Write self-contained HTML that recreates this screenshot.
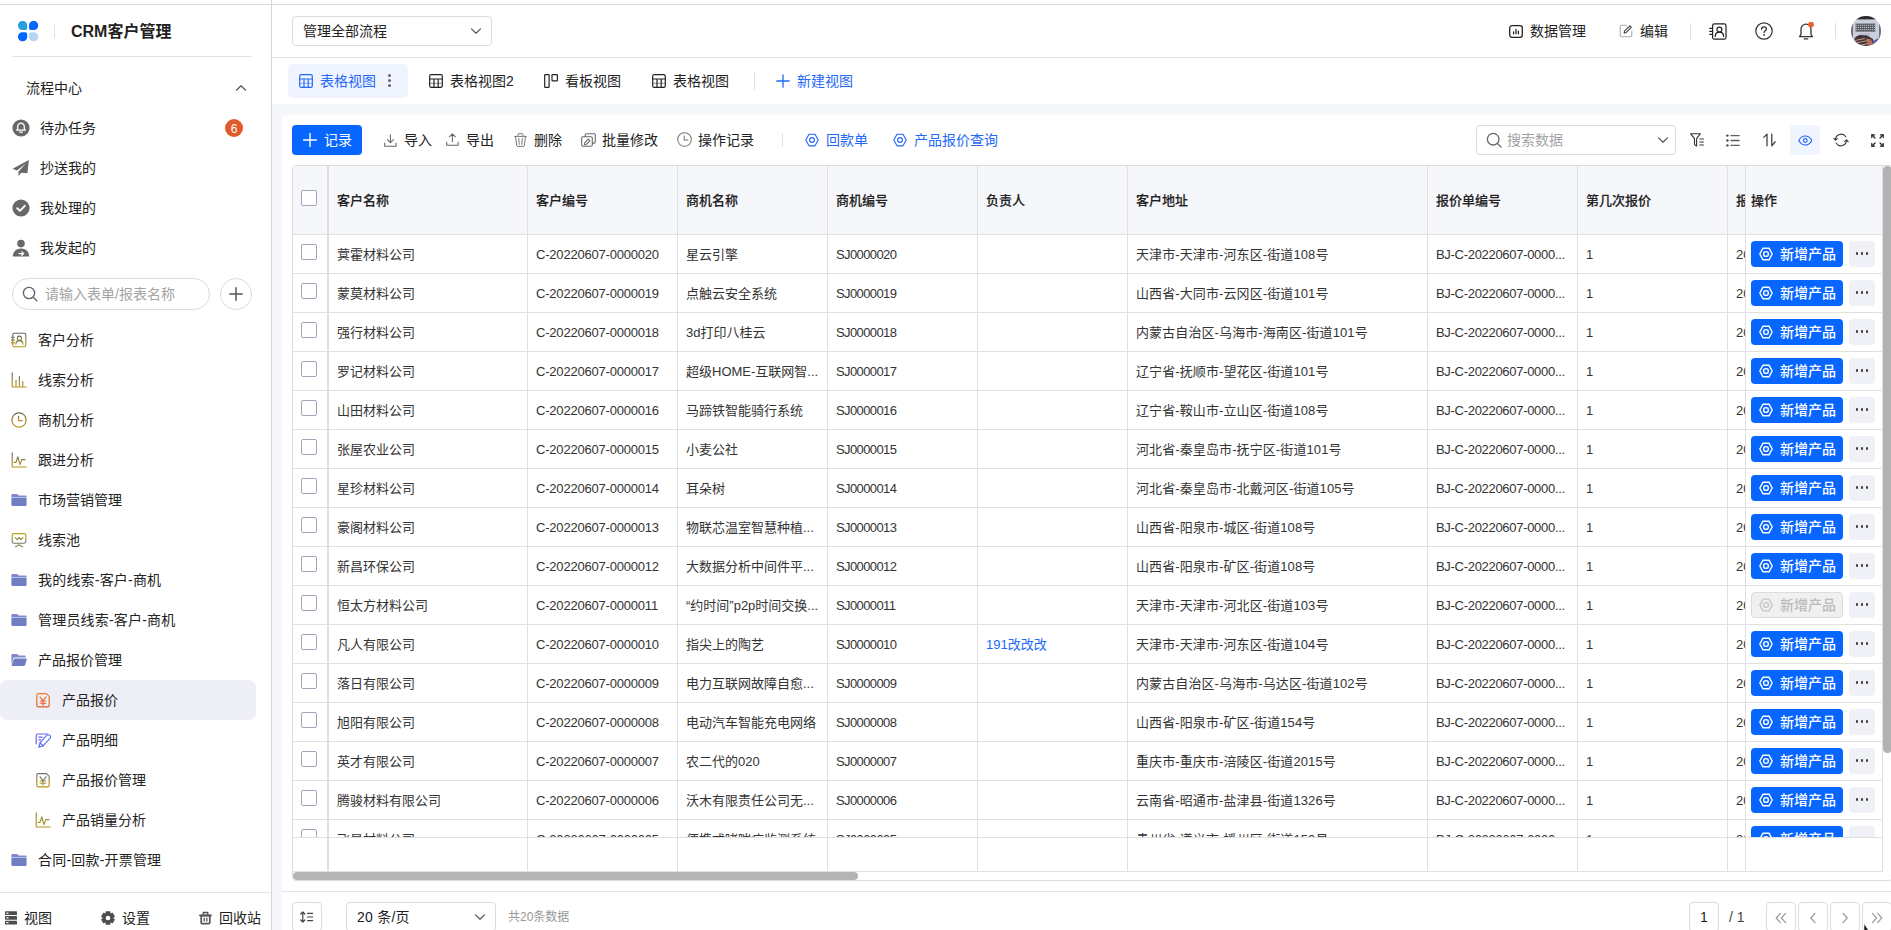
<!DOCTYPE html>
<html lang="zh-CN">
<head>
<meta charset="utf-8">
<title>CRM客户管理</title>
<style>
*{box-sizing:border-box;margin:0;padding:0}
html,body{width:1891px;height:930px;overflow:hidden;background:#fff}
body{position:relative;font-family:"Liberation Sans","Noto Sans CJK SC",sans-serif;font-size:14px;color:#222;line-height:20px}
.abs{position:absolute;white-space:nowrap}
.topline{position:absolute;left:0;top:4px;width:1891px;height:1px;background:#dcdcdc}
.side{position:absolute;left:0;top:0;width:272px;height:930px;border-right:1px solid #d6d6d6;background:transparent}
.title{font-size:16px;font-weight:bold;line-height:24px;color:#1f1f1f}
.t14{font-size:14px;line-height:20px;color:#222}
.t13{font-size:13px;line-height:20px;color:#333}
.ph{color:#a4a4a4}
.badge{width:18px;height:18px;border-radius:9px;background:#e05a2a;color:#fff;font-size:12px;line-height:18px;text-align:center;padding-top:1px}
.pill{border:1px solid #dcdcdc;border-radius:16px;background:#fff}
.main{position:absolute;left:272px;top:5px;width:1619px;height:925px;background:#f5f7fb;overflow:hidden}
.topbar{position:absolute;left:0;top:0;width:1619px;height:53px;background:#fff;border-bottom:1px solid #e2e2e2}
.tabs{position:absolute;left:0;top:53px;width:1619px;height:46px;background:#fff}
.card{position:absolute;left:10px;top:110px;width:1620px;height:830px;background:#fff;border-radius:6px 0 0 0}
.box{border:1px solid #dcdcdc;border-radius:4px;background:#fff}
.blue{color:#2468f8}
.btn{background:#0766ff;color:#fff;border-radius:4px}
.tbl{position:absolute;left:292px;top:165px;width:1601px;height:716px;border:1px solid #dcdcdc;border-radius:4px;overflow:hidden;background:#fff}
.th{position:absolute;top:0;height:69px;background:#f6f7fb;border-bottom:1px solid #e0e0e0}
.thc{position:absolute;font-size:13px;font-weight:500;-webkit-text-stroke:0.15px #222;line-height:20px;color:#222;white-space:nowrap}
.vl{position:absolute;top:0;width:1px;background:#e0e0e0}
.hl{position:absolute;left:0;height:1px;background:#e0e0e0}
.cb{position:absolute;width:16px;height:16px;border:1px solid #a3a4b8;border-radius:2px;background:#fff}
.c{position:absolute;font-size:13px;line-height:20px;color:#333;white-space:nowrap}
.ls1{letter-spacing:-0.2px}
.ls2{letter-spacing:-0.6px}
.ls3{letter-spacing:0.1px}
.ls4{letter-spacing:-0.3px}
.c.blue{color:#2468f8}
.op{position:absolute;left:1458px;width:92px;height:26px;border-radius:4px;background:#0766ff;color:#fff}
.op.dis{background:#f0f0f0;border:1px solid #dcdcdc;color:#bbb}
.op.dis span{left:28px;top:2px}
.op.dis svg{left:7px;top:5px}
.op span{position:absolute;left:29px;top:3px;font-size:14px;line-height:20px;font-weight:500}
.op svg{position:absolute;left:8px;top:6px}
.more{position:absolute;left:1556px;width:26px;height:26px;border-radius:4px;background:#eff1f7}
.more i{position:absolute;top:11.300px;width:2.700px;height:2.700px;border-radius:50%;background:#3a3a3a}

</style>
</head>
<body>
<div class="topline"></div>
<div class="side">
<div class="abs" style="left:18px;top:21px"><svg width="21" height="21" viewBox="0 0 21 21" style="display:block;"><path transform="translate(-0.3,-0.3)" d="M4.6 0.3h0.6a4.3 4.3 0 0 1 4.3 4.3v2.6a2 2 0 0 1-2 2H4.6a4.3 4.3 0 0 1-4.3-4.3v-0.3a4.3 4.3 0 0 1 4.3-4.3z" fill="#28a0dc"/><path transform="translate(0.5,-0.3)" d="M15.4 0.3h-0.6a4.3 4.3 0 0 0-4.3 4.3v2.6a2 2 0 0 0 2 2h2.9a4.3 4.3 0 0 0 4.3-4.3v-0.3a4.3 4.3 0 0 0-4.3-4.3z" fill="#0566ff"/><path transform="translate(-0.3,0.5)" d="M4.6 19.7h0.6a4.3 4.3 0 0 0 4.3-4.3v-2.6a2 2 0 0 0-2-2H4.6a4.3 4.3 0 0 0-4.3 4.3v0.3a4.3 4.3 0 0 0 4.3 4.3z" fill="#0566ff"/><path transform="translate(0.5,0.5)" d="M15.4 19.7h-0.6a4.3 4.3 0 0 1-4.3-4.3v-2.6a2 2 0 0 1 2-2h2.9a4.3 4.3 0 0 1 4.3 4.3v0.3a4.3 4.3 0 0 1-4.3 4.3z" fill="#b5d6f3"/></svg></div>
<div class="abs" style="left:54px;top:24px;width:1px;height:14px;background:#e2e2e2"></div>
<div class="abs title" style="left:71px;top:20px">CRM客户管理</div>
<div class="abs" style="left:12px;top:56px;width:240px;height:1px;background:#e3e3e3"></div>
<div class="abs t14" style="left:26px;top:78px">流程中心</div>
<div class="abs" style="left:235px;top:83px"><svg width="12" height="10" viewBox="0 0 12 10" style="display:block;"><g fill="none" stroke="#555" stroke-width="1.2" stroke-linecap="round" stroke-linejoin="round" ><path d="M1.400 7.200 6 2.800l4.600 4.400"/></g></svg></div>
<div class="abs" style="left:12px;top:119px"><svg width="18" height="18" viewBox="0 0 18 18" style="display:block;"><circle cx="9" cy="9" r="8.6" fill="#686868"/><path d="M9 4.2a3.3 3.3 0 0 0-3.3 3.3v2.4l-1 1.3h8.6l-1-1.3V7.5A3.3 3.3 0 0 0 9 4.2z" fill="none" stroke="#fff" stroke-width="1.3" stroke-linejoin="round"/><path d="M7.6 13.1h2.8" stroke="#fff" stroke-width="1.3" stroke-linecap="round"/></svg></div><div class="abs t14" style="left:40px;top:118px">待办任务</div>
<div class="abs" style="left:12px;top:159px"><svg width="18" height="18" viewBox="0 0 18 18" style="display:block;"><path d="M16.9 0.900 0.600 9.700 4.900 11.600 13.600 4.800 6.500 12.400V16.900L9.200 13.700 15.400 14.300z" fill="#686868"/></svg></div><div class="abs t14" style="left:40px;top:158px">抄送我的</div>
<div class="abs" style="left:12px;top:199px"><svg width="18" height="18" viewBox="0 0 18 18" style="display:block;"><circle cx="9" cy="9" r="8.6" fill="#686868"/><path d="M5.2 9.2l2.7 2.6 4.9-5" fill="none" stroke="#fff" stroke-width="1.9" stroke-linecap="round" stroke-linejoin="round"/></svg></div><div class="abs t14" style="left:40px;top:198px">我处理的</div>
<div class="abs" style="left:12px;top:239px"><svg width="18" height="18" viewBox="0 0 18 18" style="display:block;"><circle cx="9" cy="4.6" r="3.8" fill="#686868"/><path d="M0.8 17.6c0-4.6 3.4-8 8.2-8s8.2 3.4 8.2 8z" fill="#686868"/><path d="M7 14.6h4.6m-1.8-1.7 1.9 1.7-1.9 1.7" fill="none" stroke="#fff" stroke-width="1.2" stroke-linecap="round" stroke-linejoin="round"/></svg></div><div class="abs t14" style="left:40px;top:238px">我发起的</div>
<div class="abs badge" style="left:225px;top:119px">6</div>
<div class="abs pill" style="left:12px;top:278px;width:198px;height:32px"></div>
<div class="abs" style="left:22px;top:286px"><svg width="16" height="16" viewBox="0 0 16 16" style="display:block;"><g fill="none" stroke="#666" stroke-width="1.4" stroke-linecap="round" stroke-linejoin="round" ><circle cx="7" cy="7" r="5.600"/><path d="M11.200 11.200l3.600 3.600"/></g></svg></div>
<div class="abs t14 ph" style="left:45px;top:284px">请输入表单/报表名称</div>
<div class="abs pill" style="left:220px;top:278px;width:32px;height:32px"></div>
<div class="abs" style="left:229px;top:287px"><svg width="14" height="14" viewBox="0 0 14 14" style="display:block;"><g fill="none" stroke="#555" stroke-width="1.5" stroke-linecap="round" stroke-linejoin="round" ><path d="M7 0.800v12.400M0.800 7h12.400"/></g></svg></div>
<div class="abs" style="left:0;top:680px;width:256px;height:40px;background:#eeeff6;border-radius:7px"></div>
<div class="abs" style="left:11px;top:332px"><svg width="16" height="16" viewBox="0 0 16 16" style="display:block;"><defs><linearGradient id="g1" x1="0" y1="0" x2="0" y2="1"><stop offset="0" stop-color="#5d6b5a"/><stop offset="1" stop-color="#b8961a"/></linearGradient></defs><g fill="none" stroke="url(#g1)" stroke-width="1.1" stroke-linecap="round" stroke-linejoin="round"><rect x="1.8" y="1.2" width="13" height="13.6" rx="1.6"/><circle cx="8.4" cy="6.2" r="2.1"/><path d="M4.9 12.2c0-2.200 1.400-3.600 3.500-3.600s3.500 1.400 3.500 3.600"/><path d="M0.500 5.300h2.800M0.500 8.100h2.800M0.500 10.900h2.800"/></g></svg></div><div class="abs t14" style="left:38px;top:330px">客户分析</div>
<div class="abs" style="left:11px;top:372px"><svg width="16" height="16" viewBox="0 0 16 16" style="display:block;"><defs><linearGradient id="g2" x1="0" y1="0" x2="0" y2="1"><stop offset="0" stop-color="#5d6b5a"/><stop offset="1" stop-color="#b8961a"/></linearGradient></defs><g fill="none" stroke="url(#g2)" stroke-width="1.1" stroke-linecap="round" stroke-linejoin="round"><path d="M1.2 0.8v14.2h14"/><path d="M5 14.6V8.2M8.4 14.6V4.6M11.8 14.6V9.6"/></g></svg></div><div class="abs t14" style="left:38px;top:370px">线索分析</div>
<div class="abs" style="left:11px;top:412px"><svg width="16" height="16" viewBox="0 0 16 16" style="display:block;"><defs><linearGradient id="g3" x1="0" y1="0" x2="0" y2="1"><stop offset="0" stop-color="#6a6a4a"/><stop offset="1" stop-color="#c0900f"/></linearGradient></defs><g fill="none" stroke="url(#g3)" stroke-width="1.1" stroke-linecap="round" stroke-linejoin="round"><circle cx="8" cy="8" r="7.1"/><path d="M7.6 4.2v4.4h3.6"/></g></svg></div><div class="abs t14" style="left:38px;top:410px">商机分析</div>
<div class="abs" style="left:11px;top:452px"><svg width="16" height="16" viewBox="0 0 16 16" style="display:block;"><defs><linearGradient id="g4" x1="0" y1="0" x2="0" y2="1"><stop offset="0" stop-color="#5d6b5a"/><stop offset="1" stop-color="#b8961a"/></linearGradient></defs><g fill="none" stroke="url(#g4)" stroke-width="1.1" stroke-linecap="round" stroke-linejoin="round"><path d="M1.2 0.8v14.2h14"/><path d="M3.200 10.400h1.800l1.800-5.600 2.200 7.800 1.800-5h3.200"/></g></svg></div><div class="abs t14" style="left:38px;top:450px">跟进分析</div>
<div class="abs" style="left:11px;top:492px"><svg width="16" height="16" viewBox="0 0 16 16" style="display:block;"><path d="M0.4 3.2c0-.7.5-1.2 1.2-1.2h4.2c.4 0 .8.2 1 .5l.7 1h7c.7 0 1.1.5 1.1 1.1V5H0.4z" fill="#7f8bcb"/><path d="M0.4 5.6h15.2v7.2c0 .7-.5 1.2-1.2 1.2H1.6c-.7 0-1.2-.5-1.2-1.2z" fill="#707dc2"/></svg></div><div class="abs t14" style="left:38px;top:490px">市场营销管理</div>
<div class="abs" style="left:11px;top:532px"><svg width="16" height="16" viewBox="0 0 16 16" style="display:block;"><defs><linearGradient id="g5" x1="0" y1="0" x2="0" y2="1"><stop offset="0" stop-color="#b8a21a"/><stop offset="1" stop-color="#707a70"/></linearGradient></defs><g fill="none" stroke="url(#g5)" stroke-width="1.1" stroke-linecap="round" stroke-linejoin="round"><rect x="1.2" y="1.6" width="13.6" height="9.6" rx="1.6"/><path d="M4 5.4l2.2 2.2 2-2.2 1.8 2.2 2-2.2"/><path d="M8 11.4v1.4M4.6 14.8 8 12.8l3.4 2"/></g></svg></div><div class="abs t14" style="left:38px;top:530px">线索池</div>
<div class="abs" style="left:11px;top:572px"><svg width="16" height="16" viewBox="0 0 16 16" style="display:block;"><path d="M0.4 3.2c0-.7.5-1.2 1.2-1.2h4.2c.4 0 .8.2 1 .5l.7 1h7c.7 0 1.1.5 1.1 1.1V5H0.4z" fill="#7f8bcb"/><path d="M0.4 5.6h15.2v7.2c0 .7-.5 1.2-1.2 1.2H1.6c-.7 0-1.2-.5-1.2-1.2z" fill="#707dc2"/></svg></div><div class="abs t14" style="left:38px;top:570px;letter-spacing:.2px">我的线索-客户-商机</div>
<div class="abs" style="left:11px;top:612px"><svg width="16" height="16" viewBox="0 0 16 16" style="display:block;"><path d="M0.4 3.2c0-.7.5-1.2 1.2-1.2h4.2c.4 0 .8.2 1 .5l.7 1h7c.7 0 1.1.5 1.1 1.1V5H0.4z" fill="#7f8bcb"/><path d="M0.4 5.6h15.2v7.2c0 .7-.5 1.2-1.2 1.2H1.6c-.7 0-1.2-.5-1.2-1.2z" fill="#707dc2"/></svg></div><div class="abs t14" style="left:38px;top:610px;letter-spacing:.2px">管理员线索-客户-商机</div>
<div class="abs" style="left:11px;top:652px"><svg width="16" height="16" viewBox="0 0 16 16" style="display:block;"><path d="M0.4 3.2c0-.7.5-1.2 1.2-1.2h4.2c.4 0 .8.2 1 .5l.7 1h6c.7 0 1.1.5 1.1 1.1v.8H3.6c-.6 0-1.1.4-1.3 1L0.4 12.4z" fill="#7f8bcb"/><path d="M3.9 6.6h11c.6 0 1 .5.8 1.1l-1.6 5.4c-.2.5-.7.9-1.2.9H1.4c-.5 0-.9-.5-.7-1l1.9-5.5c.2-.5.7-.9 1.3-.9z" fill="#707dc2"/></svg></div><div class="abs t14" style="left:38px;top:650px">产品报价管理</div>
<div class="abs" style="left:35px;top:692px"><svg width="16" height="16" viewBox="0 0 16 16" style="display:block;"><defs><linearGradient id="g6" x1="0" y1="0" x2="0" y2="1"><stop offset="0" stop-color="#ee7a2e"/><stop offset="1" stop-color="#de5a2a"/></linearGradient></defs><g fill="none" stroke="url(#g6)" stroke-width="1.15" stroke-linecap="round" stroke-linejoin="round"><path d="M1.800 3.200c0-.9.700-1.600 1.600-1.600h8l2.800 2.800v8.800c0 .9-.700 1.600-1.600 1.600H3.400c-.9 0-1.600-.7-1.600-1.600z"/><path d="M3 2h8.200" stroke-width="1.900"/><path d="M5 4.800 8 8.600l3-3.800M8 8.600v4.600M5.200 9h5.600M5.200 11.200h5.600"/></g></svg></div><div class="abs t14" style="left:62px;top:690px">产品报价</div>
<div class="abs" style="left:35px;top:732px"><svg width="16" height="16" viewBox="0 0 16 16" style="display:block;"><defs><linearGradient id="g8" x1="0" y1="0" x2="1" y2="1"><stop offset="0" stop-color="#7a5cf5"/><stop offset="1" stop-color="#3f7cf5"/></linearGradient></defs><g fill="none" stroke="url(#g8)" stroke-width="1.2" stroke-linecap="round" stroke-linejoin="round"><path d="M12.6 2H2.6C1.8 2 1.2 2.6 1.2 3.4v8.4"/><path d="M3.8 5.2h3.4M3.8 7.8h1.8"/><path d="M11.600 3.400a2.200 2.200 0 0 1 3.200 3.200l-6.800 7.200-4.200 1.400 1.200-4.400z"/><path d="M5.200 11l3 3"/></g></svg></div><div class="abs t14" style="left:62px;top:730px">产品明细</div>
<div class="abs" style="left:35px;top:772px"><svg width="16" height="16" viewBox="0 0 16 16" style="display:block;"><defs><linearGradient id="g7" x1="0" y1="0" x2="0" y2="1"><stop offset="0" stop-color="#6a7468"/><stop offset="1" stop-color="#c09a18"/></linearGradient></defs><g fill="none" stroke="url(#g7)" stroke-width="1.15" stroke-linecap="round" stroke-linejoin="round"><path d="M1.800 3.200c0-.9.700-1.600 1.600-1.600h8l2.800 2.800v8.800c0 .9-.700 1.600-1.600 1.600H3.400c-.9 0-1.600-.7-1.600-1.600z"/><path d="M3 2h8.200" stroke-width="1.900"/><path d="M5 4.800 8 8.600l3-3.800M8 8.600v4.600M5.200 9h5.600M5.200 11.200h5.600"/></g></svg></div><div class="abs t14" style="left:62px;top:770px">产品报价管理</div>
<div class="abs" style="left:35px;top:812px"><svg width="16" height="16" viewBox="0 0 16 16" style="display:block;"><defs><linearGradient id="g9" x1="0" y1="0" x2="0" y2="1"><stop offset="0" stop-color="#8a8a3a"/><stop offset="1" stop-color="#b8961a"/></linearGradient></defs><g fill="none" stroke="url(#g9)" stroke-width="1.1" stroke-linecap="round" stroke-linejoin="round"><path d="M1.2 0.8v14.2h14"/><path d="M3.200 10.400h1.800l1.800-5.600 2.200 7.800 1.800-5h3.200"/></g></svg></div><div class="abs t14" style="left:62px;top:810px">产品销量分析</div>
<div class="abs" style="left:11px;top:852px"><svg width="16" height="16" viewBox="0 0 16 16" style="display:block;"><path d="M0.4 3.2c0-.7.5-1.2 1.2-1.2h4.2c.4 0 .8.2 1 .5l.7 1h7c.7 0 1.1.5 1.1 1.1V5H0.4z" fill="#7f8bcb"/><path d="M0.4 5.6h15.2v7.2c0 .7-.5 1.2-1.2 1.2H1.6c-.7 0-1.2-.5-1.2-1.2z" fill="#707dc2"/></svg></div><div class="abs t14" style="left:38px;top:850px;letter-spacing:.2px">合同-回款-开票管理</div>
<div class="abs" style="left:0;top:892px;width:271px;height:1px;background:#e3e3e3"></div>
<div class="abs" style="left:5px;top:911px"><svg width="12" height="14" viewBox="0 0 12 14" style="display:block;"><g fill="#4d4d4d"><rect x="0" y="0.300" width="12" height="3.800" rx=".5"/><rect x="0" y="5" width="12" height="3.800" rx=".5"/><rect x="0" y="9.700" width="12" height="3.800" rx=".5"/></g><g fill="#fff"><rect x="1.300" y="1.600" width="2.200" height="1.200"/><rect x="1.300" y="6.300" width="2.200" height="1.200"/><rect x="1.300" y="11" width="2.200" height="1.200"/></g></svg></div><div class="abs t14" style="left:24px;top:908px">视图</div>
<div class="abs" style="left:101px;top:911px"><svg width="14" height="14" viewBox="0 0 14 14" style="display:block;"><path fill="#4d4d4d" stroke="#4d4d4d" stroke-width="1.200" stroke-linejoin="round" d="M5.08 2.71 L5.11 0.89 L8.89 0.89 L8.92 2.71 L9.76 3.19 L11.35 2.30 L13.24 5.58 L11.67 6.51 L11.67 7.49 L13.24 8.42 L11.35 11.70 L9.76 10.81 L8.92 11.29 L8.89 13.11 L5.11 13.11 L5.08 11.29 L4.24 10.81 L2.65 11.70 L0.76 8.42 L2.33 7.49 L2.33 6.51 L0.76 5.58 L2.65 2.30 L4.24 3.19z"/><circle cx="7" cy="7" r="2.300" fill="#fff"/></svg></div><div class="abs t14" style="left:122px;top:908px">设置</div>
<div class="abs" style="left:198.500px;top:911px"><svg width="13" height="14" viewBox="0 0 13 14" style="display:block;"><g fill="none" stroke="#555" stroke-linejoin="round"><path d="M2.200 4.600h8.600v7c0 .6-.4 1-1 1H3.200c-.6 0-1-.4-1-1z" stroke-width="1.700"/><path d="M0.900 4.300h11.200" stroke-width="1.700" stroke-linecap="round"/><path d="M4.300 3.800V1.600h4.400v2.200" stroke-width="1.500"/><path d="M5.200 6.800v3.600M7.800 6.800v3.600" stroke-width="1.300"/></g></svg></div><div class="abs t14" style="left:219px;top:908px">回收站</div>
</div>
<div class="abs" style="left:272px;top:5px;width:1619px;height:52px;background:#fff"></div>
<div class="abs" style="left:272px;top:57px;width:1619px;height:1px;background:#e2e2e2"></div>
<div class="abs" style="left:272px;top:104px;width:1619px;height:826px;background:#f5f7fb"></div>
<div class="abs" style="left:282px;top:115px;width:1620px;height:830px;background:#fff;border-radius:4px 0 0 0"></div>
<div class="abs box" style="left:292px;top:16px;width:200px;height:30px"></div><div class="abs t14" style="left:303px;top:21px">管理全部流程</div><div class="abs" style="left:470px;top:26px"><svg width="12" height="10" viewBox="0 0 12 10" style="display:block;"><g fill="none" stroke="#555" stroke-width="1.2" stroke-linecap="round" stroke-linejoin="round" ><path d="M1.500 2.900 6 7.200l4.500-4.300"/></g></svg></div>
<div class="abs" style="left:1509px;top:25px"><svg width="14" height="13" viewBox="0 0 14 13" style="display:block;"><g fill="none" stroke="#222" stroke-width="1.3" stroke-linecap="round" stroke-linejoin="round" ><rect x="0.700" y="0.700" width="12.600" height="11.600" rx="2.200"/><path d="M4.600 8.800V6.800M7 8.800V4.400M9.400 8.800V6.200"/></g></svg></div><div class="abs t14" style="left:1530px;top:21px">数据管理</div>
<div class="abs" style="left:1619px;top:24px"><svg width="14" height="14" viewBox="0 0 14 14" style="display:block;"><g fill="none" stroke-linecap="round" stroke-linejoin="round"><path d="M7.400 1.200H3c-1 0-1.800.8-1.800 1.800v8c0 1 .8 1.800 1.800 1.800h8c1 0 1.800-.8 1.800-1.800V7" stroke="#aaa" stroke-width="1.100"/><path d="M10.800 1.800l1.500 1.500-5.300 5.300-1.900.4.400-1.900z" stroke="#444" stroke-width="1.100"/></g></svg></div><div class="abs t14" style="left:1640px;top:21px">编辑</div>
<div class="abs" style="left:1690px;top:23px;width:1px;height:16px;background:#e0e0e0"></div>
<div class="abs" style="left:1709px;top:23px"><svg width="18" height="17" viewBox="0 0 18 17" style="display:block;"><g fill="none" stroke="#222" stroke-width="1.2" stroke-linecap="round" stroke-linejoin="round" ><rect x="3.600" y="0.800" width="13.400" height="15.400" rx="1.800"/><circle cx="10.400" cy="6.600" r="2.500"/><path d="M6.200 13.400c0-2.600 1.700-4.200 4.200-4.200s4.200 1.600 4.200 4.200"/><path d="M0.800 5.400h2.600M0.800 8.400h2.600M0.800 11.400h2.600"/></g></svg></div><div class="abs" style="left:1755px;top:22px"><svg width="18" height="18" viewBox="0 0 18 18" style="display:block;"><circle cx="9" cy="9" r="8.200" fill="none" stroke="#333" stroke-width="1.200"/><path d="M6.600 7.200c0-1.400 1-2.400 2.400-2.400s2.400.9 2.400 2.200c0 1.700-2.300 1.800-2.300 3.600" fill="none" stroke="#333" stroke-width="1.300" stroke-linecap="round"/><circle cx="9.100" cy="12.900" r=".9" fill="#333"/></svg></div><div class="abs" style="left:1798px;top:22px"><svg width="18" height="18" viewBox="0 0 18 18" style="display:block;"><path d="M8 2.200a5 5 0 0 0-5 5v5.200L1.600 14.600h12.800L13 12.400V7.200a5 5 0 0 0-5-5z" fill="none" stroke="#333" stroke-width="1.300" stroke-linejoin="round"/><path d="M6.200 16.800h3.600" stroke="#333" stroke-width="1.300" stroke-linecap="round"/><circle cx="13" cy="2.600" r="2.900" fill="#e8622c"/></svg></div><div class="abs" style="left:1835px;top:23px;width:1px;height:16px;background:#e0e0e0"></div><div class="abs" style="left:1851px;top:16px"><svg width="30" height="30" viewBox="0 0 30 30" style="display:block;"><defs><clipPath id="av"><circle cx="15" cy="15" r="15"/></clipPath></defs><g clip-path="url(#av)"><rect width="30" height="30" fill="#c9cfdb"/><rect x="0" y="0" width="30" height="3.400" fill="#2b2b2e"/><rect x="0" y="3.400" width="2" height="20" fill="#6d707a"/><rect x="28" y="3.400" width="2" height="20" fill="#6d707a"/><rect x="4.600" y="7.600" width="19.600" height="8" fill="#55575f"/><g stroke="#d6d9e0" stroke-width=".9"><path d="M5 9.300h19M5 11.500h19M5 13.700h19" stroke-dasharray="1.200 .8"/></g><rect x="9" y="17" width="10" height="4" fill="#b9bfcc"/><path d="M2 30c0-6 2-10 7-11l7 .6 6 3.400 1 7z" fill="#3f3335"/><path d="M4 24.500l10-2M5 27l11-2.200M8 29.500l9-2" stroke="#c79a8c" stroke-width="1.100" fill="none"/><path d="M15 22.500l5 .8 3 6.700h-6z" fill="#b5705f"/><path d="M22 25l8-4v9h-7z" fill="#565fae"/></g></svg></div>
<div class="abs" style="left:288px;top:64px;width:120px;height:34px;background:#eff4fe;border-radius:5px"></div><div class="abs" style="left:299px;top:74px"><svg width="14" height="14" viewBox="0 0 14 14" style="display:block;"><g fill="none" stroke="#2468f8" stroke-width="1.2" stroke-linecap="round" stroke-linejoin="round" ><rect x="0.700" y="0.700" width="12.600" height="12.600" rx="1.600"/><path d="M0.700 5h12.600M5 5v8.300M9.200 5v8.300"/><path d="M0.700 9.400h12.600" opacity=".4"/></g></svg></div><div class="abs t14 blue" style="left:320px;top:71px">表格视图</div><div class="abs" style="left:388px;top:74px;width:3px;height:3px;border-radius:50%;background:#666;box-shadow:0 5px 0 #666,0 10px 0 #666"></div>
<div class="abs" style="left:429px;top:74px"><svg width="14" height="14" viewBox="0 0 14 14" style="display:block;"><g fill="none" stroke="#222" stroke-width="1.2" stroke-linecap="round" stroke-linejoin="round" ><rect x="0.700" y="0.700" width="12.600" height="12.600" rx="1.600"/><path d="M0.700 5h12.600M5 5v8.300M9.200 5v8.300"/><path d="M0.700 9.400h12.600" opacity=".4"/></g></svg></div><div class="abs t14" style="left:450px;top:71px">表格视图2</div><div class="abs" style="left:544px;top:74px"><svg width="15" height="14" viewBox="0 0 15 14" style="display:block;"><g fill="none" stroke="#222" stroke-width="1.2" stroke-linecap="round" stroke-linejoin="round" ><rect x="0.700" y="0.700" width="4.400" height="12.600" rx=".6"/><rect x="8" y="0.700" width="5.400" height="6.200" rx=".6"/></g></svg></div><div class="abs t14" style="left:565px;top:71px">看板视图</div><div class="abs" style="left:652px;top:74px"><svg width="14" height="14" viewBox="0 0 14 14" style="display:block;"><g fill="none" stroke="#222" stroke-width="1.2" stroke-linecap="round" stroke-linejoin="round" ><rect x="0.700" y="0.700" width="12.600" height="12.600" rx="1.600"/><path d="M0.700 5h12.600M5 5v8.300M9.200 5v8.300"/><path d="M0.700 9.400h12.600" opacity=".4"/></g></svg></div><div class="abs t14" style="left:673px;top:71px">表格视图</div><div class="abs" style="left:754px;top:72px;width:1px;height:18px;background:#e0e0e0"></div><div class="abs" style="left:776px;top:74px"><svg width="14" height="14" viewBox="0 0 14 14" style="display:block;"><g fill="none" stroke="#2468f8" stroke-width="1.3" stroke-linecap="round" stroke-linejoin="round" ><path d="M7 0.800v12.400M0.800 7h12.400"/></g></svg></div><div class="abs t14 blue" style="left:797px;top:71px">新建视图</div>
<div class="abs btn" style="left:292px;top:125px;width:70px;height:30px"></div><div class="abs" style="left:303px;top:133px"><svg width="14" height="14" viewBox="0 0 14 14" style="display:block;"><g fill="none" stroke="#fff" stroke-width="1.4" stroke-linecap="round" stroke-linejoin="round" ><path d="M7 0.600v12.800M0.600 7h12.800"/></g></svg></div><div class="abs t14" style="left:324px;top:130px;color:#fff">记录</div>
<div class="abs" style="left:384px;top:134px"><svg width="13" height="13" viewBox="0 0 13 13" style="display:block;"><g fill="none" stroke="#666" stroke-width="1.05" stroke-linecap="round" stroke-linejoin="round" ><path d="M6.400 0.800v7.600M3.400 5.600l3 3 3-3"/><path d="M0.700 8.800v3.400h11.400V8.800" stroke-linejoin="miter" stroke-linecap="butt"/></g></svg></div><div class="abs t14" style="left:404px;top:130px">导入</div>
<div class="abs" style="left:446px;top:133px"><svg width="13" height="13" viewBox="0 0 13 13" style="display:block;"><g fill="none" stroke="#666" stroke-width="1.05" stroke-linecap="round" stroke-linejoin="round" ><path d="M6.400 8.600V0.900M3.400 3.800l3-3 3 3"/><path d="M0.700 8.800v3.400h11.400V8.800" stroke-linejoin="miter" stroke-linecap="butt"/></g></svg></div><div class="abs t14" style="left:466px;top:130px">导出</div>
<div class="abs" style="left:514px;top:133px"><svg width="13" height="14" viewBox="0 0 13 14" style="display:block;"><g fill="none" stroke="#777" stroke-width="1" stroke-linecap="round" stroke-linejoin="round" ><path d="M0.600 3.400h11.800M4 3.200V1.300c0-.3.200-.6.600-.6h3.800c.3 0 .6.200.6.600v1.900"/><path d="M1.500 3.600l1.200 8.800c.1.600.5 1 1.100 1h5.400c.6 0 1-.4 1.100-1l1.200-8.800"/><path d="M4.700 5.400l.5 6M8.300 5.400l-.5 6"/></g></svg></div><div class="abs t14" style="left:534px;top:130px">删除</div>
<div class="abs" style="left:581px;top:133px"><svg width="15" height="14" viewBox="0 0 15 14" style="display:block;"><g fill="none" stroke="#666" stroke-width="1.05" stroke-linecap="round" stroke-linejoin="round" ><path d="M4.200 3.400V1.900c0-.7.500-1.200 1.200-1.200h7.700c.7 0 1.200.5 1.200 1.200v7c0 .7-.5 1.200-1.200 1.200h-1.500"/><rect x="0.700" y="3.700" width="10.600" height="9.600" rx="1.200"/><path d="M7.300 6.100l1.700 1.700-3.700 3.600-2 .4.400-2z"/></g></svg></div><div class="abs t14" style="left:602px;top:130px">批量修改</div>
<div class="abs" style="left:677px;top:132px"><svg width="15" height="15" viewBox="0 0 15 15" style="display:block;"><g fill="none" stroke="#777" stroke-width="1.05" stroke-linecap="round" stroke-linejoin="round" ><circle cx="7.500" cy="7.500" r="6.800"/><path d="M7.200 3.800v4.200h3.600"/></g></svg></div><div class="abs t14" style="left:698px;top:130px">操作记录</div>
<div class="abs" style="left:782px;top:133px;width:1px;height:14px;background:#e0e0e0"></div><div class="abs" style="left:805px;top:133px"><svg width="14" height="14" viewBox="0 0 14 14" style="display:block;"><g fill="none" stroke="#2468f8" stroke-width="1.15" stroke-linecap="round" stroke-linejoin="round" ><path d="M4 1.200h6l3.200 5.800-3.200 5.800H4L0.800 7z"/><circle cx="7" cy="7" r="2.400"/></g></svg></div><div class="abs t14 blue" style="left:826px;top:130px">回款单</div><div class="abs" style="left:893px;top:133px"><svg width="14" height="14" viewBox="0 0 14 14" style="display:block;"><g fill="none" stroke="#2468f8" stroke-width="1.15" stroke-linecap="round" stroke-linejoin="round" ><path d="M4 1.200h6l3.200 5.800-3.200 5.800H4L0.800 7z"/><circle cx="7" cy="7" r="2.400"/></g></svg></div><div class="abs t14 blue" style="left:914px;top:130px">产品报价查询</div>
<div class="abs box" style="left:1476px;top:125px;width:200px;height:30px"></div><div class="abs" style="left:1486px;top:132px"><svg width="16" height="16" viewBox="0 0 16 16" style="display:block;"><g fill="none" stroke="#666" stroke-width="1.3" stroke-linecap="round" stroke-linejoin="round" ><circle cx="7.200" cy="7.200" r="5.800"/><path d="M11.600 11.600l3.400 3.400"/></g></svg></div><div class="abs t14 ph" style="left:1507px;top:130px">搜索数据</div><div class="abs" style="left:1657px;top:135px"><svg width="12" height="10" viewBox="0 0 12 10" style="display:block;"><g fill="none" stroke="#555" stroke-width="1.2" stroke-linecap="round" stroke-linejoin="round" ><path d="M1.500 2.900 6 7.200l4.500-4.300"/></g></svg></div>
<div class="abs" style="left:1790px;top:125px;width:30px;height:30px;background:#eff4fe;border-radius:4px"></div><div class="abs" style="left:1690.0px;top:133.0px"><svg width="14" height="14" viewBox="0 0 14 14" style="display:block;"><g fill="none" stroke="#333" stroke-width="1.1" stroke-linecap="round" stroke-linejoin="round" ><path d="M0.700 0.800h9.600L6.600 5.600v7.400L4.500 11.600V5.600z"/><path d="M9.800 6h3.600M9.800 9h3.600M9.800 12h3.600"/></g></svg></div><div class="abs" style="left:1726.0px;top:133.5px"><svg width="14" height="13" viewBox="0 0 14 13" style="display:block;"><g fill="#4a4a55"><circle cx="1.400" cy="1.600" r="1.200"/><circle cx="1.400" cy="6.500" r="1.200"/><circle cx="1.400" cy="11.400" r="1.200"/></g><g stroke="#5a6257" stroke-width="1.300" stroke-linecap="round"><path d="M5 1.600h8.200M5 6.500h8.200M5 11.400h8.200"/></g></svg></div><div class="abs" style="left:1763.0px;top:133.0px"><svg width="13" height="14" viewBox="0 0 13 14" style="display:block;"><g fill="none" stroke="#333" stroke-width="1.2" stroke-linecap="round" stroke-linejoin="round" ><path d="M0.800 4.400 4 1.200v11.600"/><path d="M12.200 8.600 8.800 12.800V1.200"/></g></svg></div><div class="abs" style="left:1797.7px;top:134.5px"><svg width="14.6" height="11" viewBox="0 0 16 12" style="display:block;"><g fill="none" stroke="#2468f8" stroke-width="1.25" stroke-linecap="round" stroke-linejoin="round" ><path d="M0.800 6C2.600 2.800 5 1.100 8 1.100S13.400 2.800 15.200 6C13.400 9.200 11 10.900 8 10.900S2.600 9.200 0.800 6z"/><circle cx="8" cy="6" r="2"/></g></svg></div><div class="abs" style="left:1833.0px;top:133.0px"><svg width="16" height="14" viewBox="0 0 17 15" style="display:block;"><g fill="none" stroke="#333" stroke-width="1.2" stroke-linecap="round" stroke-linejoin="round" ><path d="M2.600 7.200a6 6 0 0 1 11-3.200"/><path d="M14.400 7.800a6 6 0 0 1-11 3.200"/><path d="M0.800 5.800l1.800 1.800 2-1.600M16.200 9.200l-1.800-1.800-2 1.600"/></g></svg></div><div class="abs" style="left:1870.5px;top:133.5px"><svg width="13" height="13" viewBox="0 0 13 13" style="display:block;"><g fill="none" stroke="#222" stroke-width="1.2" stroke-linecap="round" stroke-linejoin="round" ><path d="M0.800 3.600V0.800h2.800M9.400 0.800h2.800v2.800M12.200 9.400v2.800H9.400M3.600 12.200H0.800V9.400"/><path d="M1 1l3 3M12 1 9 4M12 12 9 9M1 12l3-3"/></g></svg></div>
<div class="tbl">
<div class="th" style="left:0;width:1597px"></div>
<div class="vl" style="left:234px;height:706px"></div><div class="vl" style="left:384px;height:706px"></div><div class="vl" style="left:534px;height:706px"></div><div class="vl" style="left:684px;height:706px"></div><div class="vl" style="left:834px;height:706px"></div><div class="vl" style="left:1134px;height:706px"></div><div class="vl" style="left:1284px;height:706px"></div><div class="vl" style="left:1434px;height:706px"></div><div class="vl" style="left:34px;width:2px;height:706px;background:#dedede"></div>
<div class="thc" style="left:44px;top:25px">客户名称</div><div class="thc" style="left:243px;top:25px">客户编号</div><div class="thc" style="left:393px;top:25px">商机名称</div><div class="thc" style="left:543px;top:25px">商机编号</div><div class="thc" style="left:693px;top:25px">负责人</div><div class="thc" style="left:843px;top:25px">客户地址</div><div class="thc" style="left:1143px;top:25px">报价单编号</div><div class="thc" style="left:1293px;top:25px">第几次报价</div><div class="thc" style="left:1443px;top:25px">报价日期</div><div class="cb" style="left:8px;top:24px"></div>
<div class="abs" style="left:0;top:69px;width:1590px;height:602px;overflow:hidden">
<div class="hl" style="top:38px;width:1597px"></div><div class="cb" style="left:8px;top:9px"></div><div class="c" style="left:44px;top:10px">蓂霍材料公司</div><div class="c ls1" style="left:243px;top:10px">C-20220607-0000020</div><div class="c" style="left:393px;top:10px">星云引擎</div><div class="c ls2" style="left:543px;top:10px">SJ0000020</div><div class="c ls3" style="left:843px;top:10px">天津市-天津市-河东区-街道108号</div><div class="c ls4" style="left:1143px;top:10px">BJ-C-20220607-0000...</div><div class="c" style="left:1293px;top:10px">1</div><div class="c" style="left:1443px;top:10px">2022-06-07</div>
<div class="hl" style="top:77px;width:1597px"></div><div class="cb" style="left:8px;top:48px"></div><div class="c" style="left:44px;top:49px">蒙莫材料公司</div><div class="c ls1" style="left:243px;top:49px">C-20220607-0000019</div><div class="c" style="left:393px;top:49px">点触云安全系统</div><div class="c ls2" style="left:543px;top:49px">SJ0000019</div><div class="c ls3" style="left:843px;top:49px">山西省-大同市-云冈区-街道101号</div><div class="c ls4" style="left:1143px;top:49px">BJ-C-20220607-0000...</div><div class="c" style="left:1293px;top:49px">1</div><div class="c" style="left:1443px;top:49px">2022-06-07</div>
<div class="hl" style="top:116px;width:1597px"></div><div class="cb" style="left:8px;top:87px"></div><div class="c" style="left:44px;top:88px">强行材料公司</div><div class="c ls1" style="left:243px;top:88px">C-20220607-0000018</div><div class="c" style="left:393px;top:88px">3d打印八桂云</div><div class="c ls2" style="left:543px;top:88px">SJ0000018</div><div class="c ls3" style="left:843px;top:88px">内蒙古自治区-乌海市-海南区-街道101号</div><div class="c ls4" style="left:1143px;top:88px">BJ-C-20220607-0000...</div><div class="c" style="left:1293px;top:88px">1</div><div class="c" style="left:1443px;top:88px">2022-06-07</div>
<div class="hl" style="top:155px;width:1597px"></div><div class="cb" style="left:8px;top:126px"></div><div class="c" style="left:44px;top:127px">罗记材料公司</div><div class="c ls1" style="left:243px;top:127px">C-20220607-0000017</div><div class="c" style="left:393px;top:127px">超级HOME-互联网智...</div><div class="c ls2" style="left:543px;top:127px">SJ0000017</div><div class="c ls3" style="left:843px;top:127px">辽宁省-抚顺市-望花区-街道101号</div><div class="c ls4" style="left:1143px;top:127px">BJ-C-20220607-0000...</div><div class="c" style="left:1293px;top:127px">1</div><div class="c" style="left:1443px;top:127px">2022-06-07</div>
<div class="hl" style="top:194px;width:1597px"></div><div class="cb" style="left:8px;top:165px"></div><div class="c" style="left:44px;top:166px">山田材料公司</div><div class="c ls1" style="left:243px;top:166px">C-20220607-0000016</div><div class="c" style="left:393px;top:166px">马蹄铁智能骑行系统</div><div class="c ls2" style="left:543px;top:166px">SJ0000016</div><div class="c ls3" style="left:843px;top:166px">辽宁省-鞍山市-立山区-街道108号</div><div class="c ls4" style="left:1143px;top:166px">BJ-C-20220607-0000...</div><div class="c" style="left:1293px;top:166px">1</div><div class="c" style="left:1443px;top:166px">2022-06-07</div>
<div class="hl" style="top:233px;width:1597px"></div><div class="cb" style="left:8px;top:204px"></div><div class="c" style="left:44px;top:205px">张屋农业公司</div><div class="c ls1" style="left:243px;top:205px">C-20220607-0000015</div><div class="c" style="left:393px;top:205px">小麦公社</div><div class="c ls2" style="left:543px;top:205px">SJ0000015</div><div class="c ls3" style="left:843px;top:205px">河北省-秦皇岛市-抚宁区-街道101号</div><div class="c ls4" style="left:1143px;top:205px">BJ-C-20220607-0000...</div><div class="c" style="left:1293px;top:205px">1</div><div class="c" style="left:1443px;top:205px">2022-06-07</div>
<div class="hl" style="top:272px;width:1597px"></div><div class="cb" style="left:8px;top:243px"></div><div class="c" style="left:44px;top:244px">星珍材料公司</div><div class="c ls1" style="left:243px;top:244px">C-20220607-0000014</div><div class="c" style="left:393px;top:244px">耳朵树</div><div class="c ls2" style="left:543px;top:244px">SJ0000014</div><div class="c ls3" style="left:843px;top:244px">河北省-秦皇岛市-北戴河区-街道105号</div><div class="c ls4" style="left:1143px;top:244px">BJ-C-20220607-0000...</div><div class="c" style="left:1293px;top:244px">1</div><div class="c" style="left:1443px;top:244px">2022-06-07</div>
<div class="hl" style="top:311px;width:1597px"></div><div class="cb" style="left:8px;top:282px"></div><div class="c" style="left:44px;top:283px">豪阁材料公司</div><div class="c ls1" style="left:243px;top:283px">C-20220607-0000013</div><div class="c" style="left:393px;top:283px">物联芯温室智慧种植...</div><div class="c ls2" style="left:543px;top:283px">SJ0000013</div><div class="c ls3" style="left:843px;top:283px">山西省-阳泉市-城区-街道108号</div><div class="c ls4" style="left:1143px;top:283px">BJ-C-20220607-0000...</div><div class="c" style="left:1293px;top:283px">1</div><div class="c" style="left:1443px;top:283px">2022-06-07</div>
<div class="hl" style="top:350px;width:1597px"></div><div class="cb" style="left:8px;top:321px"></div><div class="c" style="left:44px;top:322px">新昌环保公司</div><div class="c ls1" style="left:243px;top:322px">C-20220607-0000012</div><div class="c" style="left:393px;top:322px">大数据分析中间件平...</div><div class="c ls2" style="left:543px;top:322px">SJ0000012</div><div class="c ls3" style="left:843px;top:322px">山西省-阳泉市-矿区-街道108号</div><div class="c ls4" style="left:1143px;top:322px">BJ-C-20220607-0000...</div><div class="c" style="left:1293px;top:322px">1</div><div class="c" style="left:1443px;top:322px">2022-06-07</div>
<div class="hl" style="top:389px;width:1597px"></div><div class="cb" style="left:8px;top:360px"></div><div class="c" style="left:44px;top:361px">恒太方材料公司</div><div class="c ls1" style="left:243px;top:361px">C-20220607-0000011</div><div class="c" style="left:393px;top:361px">“约时间”p2p时间交换...</div><div class="c ls2" style="left:543px;top:361px">SJ0000011</div><div class="c ls3" style="left:843px;top:361px">天津市-天津市-河北区-街道103号</div><div class="c ls4" style="left:1143px;top:361px">BJ-C-20220607-0000...</div><div class="c" style="left:1293px;top:361px">1</div><div class="c" style="left:1443px;top:361px">2022-06-07</div>
<div class="hl" style="top:428px;width:1597px"></div><div class="cb" style="left:8px;top:399px"></div><div class="c" style="left:44px;top:400px">凡人有限公司</div><div class="c ls1" style="left:243px;top:400px">C-20220607-0000010</div><div class="c" style="left:393px;top:400px">指尖上的陶艺</div><div class="c ls2" style="left:543px;top:400px">SJ0000010</div><div class="c blue" style="left:693px;top:400px">191改改改</div><div class="c ls3" style="left:843px;top:400px">天津市-天津市-河东区-街道104号</div><div class="c ls4" style="left:1143px;top:400px">BJ-C-20220607-0000...</div><div class="c" style="left:1293px;top:400px">1</div><div class="c" style="left:1443px;top:400px">2022-06-07</div>
<div class="hl" style="top:467px;width:1597px"></div><div class="cb" style="left:8px;top:438px"></div><div class="c" style="left:44px;top:439px">落日有限公司</div><div class="c ls1" style="left:243px;top:439px">C-20220607-0000009</div><div class="c" style="left:393px;top:439px">电力互联网故障自愈...</div><div class="c ls2" style="left:543px;top:439px">SJ0000009</div><div class="c ls3" style="left:843px;top:439px">内蒙古自治区-乌海市-乌达区-街道102号</div><div class="c ls4" style="left:1143px;top:439px">BJ-C-20220607-0000...</div><div class="c" style="left:1293px;top:439px">1</div><div class="c" style="left:1443px;top:439px">2022-06-07</div>
<div class="hl" style="top:506px;width:1597px"></div><div class="cb" style="left:8px;top:477px"></div><div class="c" style="left:44px;top:478px">旭阳有限公司</div><div class="c ls1" style="left:243px;top:478px">C-20220607-0000008</div><div class="c" style="left:393px;top:478px">电动汽车智能充电网络</div><div class="c ls2" style="left:543px;top:478px">SJ0000008</div><div class="c ls3" style="left:843px;top:478px">山西省-阳泉市-矿区-街道154号</div><div class="c ls4" style="left:1143px;top:478px">BJ-C-20220607-0000...</div><div class="c" style="left:1293px;top:478px">1</div><div class="c" style="left:1443px;top:478px">2022-06-07</div>
<div class="hl" style="top:545px;width:1597px"></div><div class="cb" style="left:8px;top:516px"></div><div class="c" style="left:44px;top:517px">英才有限公司</div><div class="c ls1" style="left:243px;top:517px">C-20220607-0000007</div><div class="c" style="left:393px;top:517px">农二代的020</div><div class="c ls2" style="left:543px;top:517px">SJ0000007</div><div class="c ls3" style="left:843px;top:517px">重庆市-重庆市-涪陵区-街道2015号</div><div class="c ls4" style="left:1143px;top:517px">BJ-C-20220607-0000...</div><div class="c" style="left:1293px;top:517px">1</div><div class="c" style="left:1443px;top:517px">2022-06-07</div>
<div class="hl" style="top:584px;width:1597px"></div><div class="cb" style="left:8px;top:555px"></div><div class="c" style="left:44px;top:556px">腾骏材料有限公司</div><div class="c ls1" style="left:243px;top:556px">C-20220607-0000006</div><div class="c" style="left:393px;top:556px">沃木有限责任公司无...</div><div class="c ls2" style="left:543px;top:556px">SJ0000006</div><div class="c ls3" style="left:843px;top:556px">云南省-昭通市-盐津县-街道1326号</div><div class="c ls4" style="left:1143px;top:556px">BJ-C-20220607-0000...</div><div class="c" style="left:1293px;top:556px">1</div><div class="c" style="left:1443px;top:556px">2022-06-07</div>
<div class="hl" style="top:623px;width:1597px"></div><div class="cb" style="left:8px;top:594px"></div><div class="c" style="left:44px;top:595px">飞星材料公司</div><div class="c ls1" style="left:243px;top:595px">C-20220607-0000005</div><div class="c" style="left:393px;top:595px">便携式哮喘病监测系统</div><div class="c ls2" style="left:543px;top:595px">SJ0000005</div><div class="c ls3" style="left:843px;top:595px">贵州省-遵义市-播州区-街道150号</div><div class="c ls4" style="left:1143px;top:595px">BJ-C-20220607-0000...</div><div class="c" style="left:1293px;top:595px">1</div><div class="c" style="left:1443px;top:595px">2022-06-07</div>
</div>
<div class="hl" style="top:671px;width:1590px"></div><div class="hl" style="top:705px;width:1590px"></div>
<div class="abs" style="left:1452px;top:0;width:138px;height:706px;background:#fff;border-left:1px solid #e0e0e0;border-right:1px solid #e0e0e0"><div class="th" style="left:0;width:136px"></div><div class="thc" style="left:5px;top:25px">操作</div><div class="abs" style="left:0;top:69px;width:136px;height:602px;overflow:hidden"><div class="hl" style="top:38px;width:136px"></div><div class="op" style="left:5px;top:6px"><svg width="14" height="14" viewBox="0 0 14 14" style="display:block;"><g fill="none" stroke="#fff" stroke-width="1.4" stroke-linecap="round" stroke-linejoin="round" ><path d="M4 1.200h6l3.200 5.800-3.200 5.800H4L0.800 7z"/><circle cx="7" cy="7" r="2.400"/></g></svg><span>新增产品</span></div><div class="more" style="left:103px;top:6px"><i style="left:6.600px"></i><i style="left:11.700px"></i><i style="left:16.800px"></i></div>
<div class="hl" style="top:77px;width:136px"></div><div class="op" style="left:5px;top:45px"><svg width="14" height="14" viewBox="0 0 14 14" style="display:block;"><g fill="none" stroke="#fff" stroke-width="1.4" stroke-linecap="round" stroke-linejoin="round" ><path d="M4 1.200h6l3.200 5.800-3.200 5.800H4L0.800 7z"/><circle cx="7" cy="7" r="2.400"/></g></svg><span>新增产品</span></div><div class="more" style="left:103px;top:45px"><i style="left:6.600px"></i><i style="left:11.700px"></i><i style="left:16.800px"></i></div>
<div class="hl" style="top:116px;width:136px"></div><div class="op" style="left:5px;top:84px"><svg width="14" height="14" viewBox="0 0 14 14" style="display:block;"><g fill="none" stroke="#fff" stroke-width="1.4" stroke-linecap="round" stroke-linejoin="round" ><path d="M4 1.200h6l3.200 5.800-3.200 5.800H4L0.800 7z"/><circle cx="7" cy="7" r="2.400"/></g></svg><span>新增产品</span></div><div class="more" style="left:103px;top:84px"><i style="left:6.600px"></i><i style="left:11.700px"></i><i style="left:16.800px"></i></div>
<div class="hl" style="top:155px;width:136px"></div><div class="op" style="left:5px;top:123px"><svg width="14" height="14" viewBox="0 0 14 14" style="display:block;"><g fill="none" stroke="#fff" stroke-width="1.4" stroke-linecap="round" stroke-linejoin="round" ><path d="M4 1.200h6l3.200 5.800-3.200 5.800H4L0.800 7z"/><circle cx="7" cy="7" r="2.400"/></g></svg><span>新增产品</span></div><div class="more" style="left:103px;top:123px"><i style="left:6.600px"></i><i style="left:11.700px"></i><i style="left:16.800px"></i></div>
<div class="hl" style="top:194px;width:136px"></div><div class="op" style="left:5px;top:162px"><svg width="14" height="14" viewBox="0 0 14 14" style="display:block;"><g fill="none" stroke="#fff" stroke-width="1.4" stroke-linecap="round" stroke-linejoin="round" ><path d="M4 1.200h6l3.200 5.800-3.200 5.800H4L0.800 7z"/><circle cx="7" cy="7" r="2.400"/></g></svg><span>新增产品</span></div><div class="more" style="left:103px;top:162px"><i style="left:6.600px"></i><i style="left:11.700px"></i><i style="left:16.800px"></i></div>
<div class="hl" style="top:233px;width:136px"></div><div class="op" style="left:5px;top:201px"><svg width="14" height="14" viewBox="0 0 14 14" style="display:block;"><g fill="none" stroke="#fff" stroke-width="1.4" stroke-linecap="round" stroke-linejoin="round" ><path d="M4 1.200h6l3.200 5.800-3.200 5.800H4L0.800 7z"/><circle cx="7" cy="7" r="2.400"/></g></svg><span>新增产品</span></div><div class="more" style="left:103px;top:201px"><i style="left:6.600px"></i><i style="left:11.700px"></i><i style="left:16.800px"></i></div>
<div class="hl" style="top:272px;width:136px"></div><div class="op" style="left:5px;top:240px"><svg width="14" height="14" viewBox="0 0 14 14" style="display:block;"><g fill="none" stroke="#fff" stroke-width="1.4" stroke-linecap="round" stroke-linejoin="round" ><path d="M4 1.200h6l3.200 5.800-3.200 5.800H4L0.800 7z"/><circle cx="7" cy="7" r="2.400"/></g></svg><span>新增产品</span></div><div class="more" style="left:103px;top:240px"><i style="left:6.600px"></i><i style="left:11.700px"></i><i style="left:16.800px"></i></div>
<div class="hl" style="top:311px;width:136px"></div><div class="op" style="left:5px;top:279px"><svg width="14" height="14" viewBox="0 0 14 14" style="display:block;"><g fill="none" stroke="#fff" stroke-width="1.4" stroke-linecap="round" stroke-linejoin="round" ><path d="M4 1.200h6l3.200 5.800-3.200 5.800H4L0.800 7z"/><circle cx="7" cy="7" r="2.400"/></g></svg><span>新增产品</span></div><div class="more" style="left:103px;top:279px"><i style="left:6.600px"></i><i style="left:11.700px"></i><i style="left:16.800px"></i></div>
<div class="hl" style="top:350px;width:136px"></div><div class="op" style="left:5px;top:318px"><svg width="14" height="14" viewBox="0 0 14 14" style="display:block;"><g fill="none" stroke="#fff" stroke-width="1.4" stroke-linecap="round" stroke-linejoin="round" ><path d="M4 1.200h6l3.200 5.800-3.200 5.800H4L0.800 7z"/><circle cx="7" cy="7" r="2.400"/></g></svg><span>新增产品</span></div><div class="more" style="left:103px;top:318px"><i style="left:6.600px"></i><i style="left:11.700px"></i><i style="left:16.800px"></i></div>
<div class="hl" style="top:389px;width:136px"></div><div class="op dis" style="left:5px;top:357px"><svg width="14" height="14" viewBox="0 0 14 14" style="display:block;"><g fill="none" stroke="#c4c4c4" stroke-width="1.3" stroke-linecap="round" stroke-linejoin="round" ><path d="M4 1.200h6l3.200 5.800-3.200 5.800H4L0.800 7z"/><circle cx="7" cy="7" r="2.400"/></g></svg><span>新增产品</span></div><div class="more" style="left:103px;top:357px"><i style="left:6.600px"></i><i style="left:11.700px"></i><i style="left:16.800px"></i></div>
<div class="hl" style="top:428px;width:136px"></div><div class="op" style="left:5px;top:396px"><svg width="14" height="14" viewBox="0 0 14 14" style="display:block;"><g fill="none" stroke="#fff" stroke-width="1.4" stroke-linecap="round" stroke-linejoin="round" ><path d="M4 1.200h6l3.200 5.800-3.200 5.800H4L0.800 7z"/><circle cx="7" cy="7" r="2.400"/></g></svg><span>新增产品</span></div><div class="more" style="left:103px;top:396px"><i style="left:6.600px"></i><i style="left:11.700px"></i><i style="left:16.800px"></i></div>
<div class="hl" style="top:467px;width:136px"></div><div class="op" style="left:5px;top:435px"><svg width="14" height="14" viewBox="0 0 14 14" style="display:block;"><g fill="none" stroke="#fff" stroke-width="1.4" stroke-linecap="round" stroke-linejoin="round" ><path d="M4 1.200h6l3.200 5.800-3.200 5.800H4L0.800 7z"/><circle cx="7" cy="7" r="2.400"/></g></svg><span>新增产品</span></div><div class="more" style="left:103px;top:435px"><i style="left:6.600px"></i><i style="left:11.700px"></i><i style="left:16.800px"></i></div>
<div class="hl" style="top:506px;width:136px"></div><div class="op" style="left:5px;top:474px"><svg width="14" height="14" viewBox="0 0 14 14" style="display:block;"><g fill="none" stroke="#fff" stroke-width="1.4" stroke-linecap="round" stroke-linejoin="round" ><path d="M4 1.200h6l3.200 5.800-3.200 5.800H4L0.800 7z"/><circle cx="7" cy="7" r="2.400"/></g></svg><span>新增产品</span></div><div class="more" style="left:103px;top:474px"><i style="left:6.600px"></i><i style="left:11.700px"></i><i style="left:16.800px"></i></div>
<div class="hl" style="top:545px;width:136px"></div><div class="op" style="left:5px;top:513px"><svg width="14" height="14" viewBox="0 0 14 14" style="display:block;"><g fill="none" stroke="#fff" stroke-width="1.4" stroke-linecap="round" stroke-linejoin="round" ><path d="M4 1.200h6l3.200 5.800-3.200 5.800H4L0.800 7z"/><circle cx="7" cy="7" r="2.400"/></g></svg><span>新增产品</span></div><div class="more" style="left:103px;top:513px"><i style="left:6.600px"></i><i style="left:11.700px"></i><i style="left:16.800px"></i></div>
<div class="hl" style="top:584px;width:136px"></div><div class="op" style="left:5px;top:552px"><svg width="14" height="14" viewBox="0 0 14 14" style="display:block;"><g fill="none" stroke="#fff" stroke-width="1.4" stroke-linecap="round" stroke-linejoin="round" ><path d="M4 1.200h6l3.200 5.800-3.200 5.800H4L0.800 7z"/><circle cx="7" cy="7" r="2.400"/></g></svg><span>新增产品</span></div><div class="more" style="left:103px;top:552px"><i style="left:6.600px"></i><i style="left:11.700px"></i><i style="left:16.800px"></i></div>
<div class="hl" style="top:623px;width:136px"></div><div class="op" style="left:5px;top:591px"><svg width="14" height="14" viewBox="0 0 14 14" style="display:block;"><g fill="none" stroke="#fff" stroke-width="1.4" stroke-linecap="round" stroke-linejoin="round" ><path d="M4 1.200h6l3.200 5.800-3.200 5.800H4L0.800 7z"/><circle cx="7" cy="7" r="2.400"/></g></svg><span>新增产品</span></div><div class="more" style="left:103px;top:591px"><i style="left:6.600px"></i><i style="left:11.700px"></i><i style="left:16.800px"></i></div>
</div><div class="hl" style="top:671px;width:136px"></div><div class="hl" style="top:705px;width:136px"></div></div>
<div class="abs" style="left:1590.3px;top:0;width:8.400px;height:587px;background:#b2b2b2;border-radius:4.200px"></div>
<div class="abs" style="left:0;top:706px;width:565px;height:8px;background:#b4b4b4;border-radius:4px"></div>
</div>
<div class="abs" style="left:282px;top:891px;width:1609px;height:1px;background:#e3e3e3"></div>
<div class="abs box" style="left:292px;top:902px;width:30px;height:30px"></div><div class="abs" style="left:300px;top:911px"><svg width="14" height="12" viewBox="0 0 14 12" style="display:block;"><g fill="none" stroke="#444" stroke-width="1.200" stroke-linecap="round" stroke-linejoin="round"><path d="M2.800 1.200v9.600M0.800 3l2-2 2 2M0.800 9l2 2 2-2"/><path d="M7.600 2.400h5M7.600 6h5M7.600 9.600h5"/></g></svg></div><div class="abs box" style="left:346px;top:902px;width:150px;height:30px"></div><div class="abs t14" style="left:357px;top:907px;letter-spacing:.25px">20 条/页</div><div class="abs" style="left:474px;top:912px"><svg width="12" height="10" viewBox="0 0 12 10" style="display:block;"><g fill="none" stroke="#555" stroke-width="1.2" stroke-linecap="round" stroke-linejoin="round" ><path d="M1.500 2.900 6 7.200l4.500-4.300"/></g></svg></div><div class="abs" style="left:508px;top:908px;font-size:12px;line-height:18px;color:#999">共20条数据</div>
<div class="abs box" style="left:1689px;top:902px;width:30px;height:30px"></div><div class="abs t14" style="left:1700px;top:907px">1</div><div class="abs t14" style="left:1729px;top:907px;color:#444">/ 1</div><div class="abs box" style="left:1766px;top:902px;width:30px;height:30px"></div><div class="abs" style="left:1774px;top:912px"><svg width="14" height="12" viewBox="0 0 14 12" style="display:block;"><g fill="none" stroke="#999" stroke-width="1.200" stroke-linecap="round" stroke-linejoin="round"><path d="M6.400 1.400 2.200 6l4.200 4.600M11.600 1.400 7.400 6l4.200 4.600"/></g></svg></div><div class="abs box" style="left:1798px;top:902px;width:30px;height:30px"></div><div class="abs" style="left:1806px;top:912px"><svg width="14" height="12" viewBox="0 0 14 12" style="display:block;"><g fill="none" stroke="#999" stroke-width="1.200" stroke-linecap="round" stroke-linejoin="round"><path d="M9 1.400 4.800 6 9 10.600"/></g></svg></div><div class="abs box" style="left:1830px;top:902px;width:30px;height:30px"></div><div class="abs" style="left:1838px;top:912px"><svg width="14" height="12" viewBox="0 0 14 12" style="display:block;"><g fill="none" stroke="#999" stroke-width="1.200" stroke-linecap="round" stroke-linejoin="round"><path d="M5 1.400 9.200 6 5 10.600"/></g></svg></div><div class="abs box" style="left:1862px;top:902px;width:30px;height:30px"></div><div class="abs" style="left:1870px;top:912px"><svg width="14" height="12" viewBox="0 0 14 12" style="display:block;"><g fill="none" stroke="#999" stroke-width="1.200" stroke-linecap="round" stroke-linejoin="round"><path d="M2.400 1.400 6.600 6l-4.200 4.600M7.600 1.400 11.800 6l-4.200 4.600"/></g></svg></div>
<svg class="abs" style="left:1863px;top:923px" width="12" height="8" viewBox="0 0 12 8"><path d="M1 0.500v9l2.600-2.400L6 8z" fill="#111" stroke="#fff" stroke-width=".6"/></svg>
</body>
</html>
